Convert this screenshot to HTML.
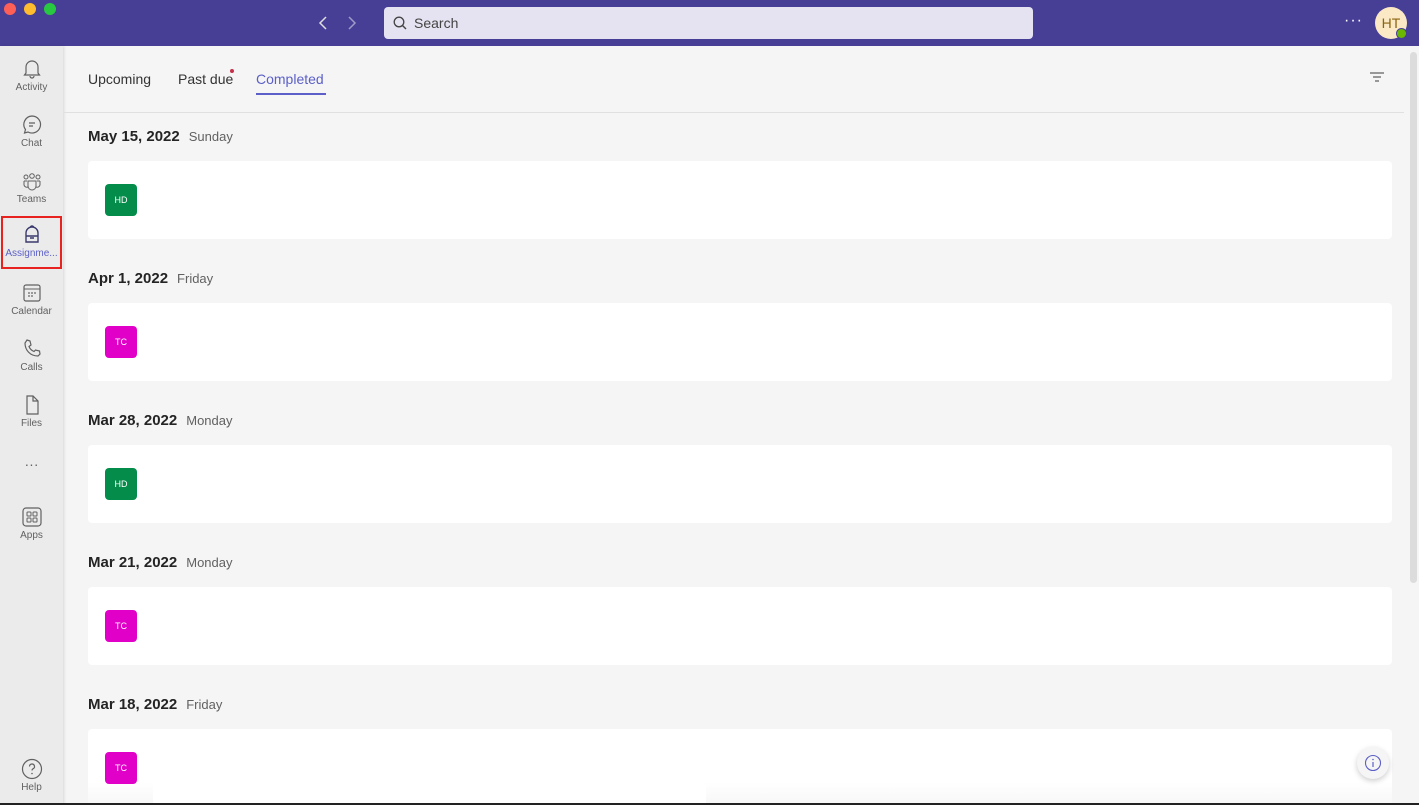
<!DOCTYPE html>
<html><head><meta charset="utf-8"><style>
*{margin:0;padding:0;box-sizing:border-box}
body{width:1419px;height:805px;overflow:hidden;background:#f5f5f5;font-family:"Liberation Sans",sans-serif;position:relative}
.top{position:absolute;left:0;top:0;width:1419px;height:46px;background:#473f96}
.dot{position:absolute;top:3px;width:12px;height:12px;border-radius:50%}
.search{position:absolute;left:384px;top:7px;width:649px;height:32px;background:#e5e3f1;border-radius:4px;font-size:14px;color:#444;padding:8px 0 0 30px}
.side{position:absolute;left:0;top:46px;width:63px;height:759px;background:#ebebeb;box-shadow:1px 0 3px rgba(0,0,0,.12)}
.it{position:absolute;left:0;width:63px;text-align:center;font-size:10px;color:#616161}
.it svg{display:block;margin:0 auto 2px}
.tab{position:absolute;top:71px;font-size:14px;color:#333}
.date{position:absolute;left:88px;font-size:15px;font-weight:bold;color:#242424}
.date span{font-weight:normal;font-size:13px;color:#616161;margin-left:9px}
.card{position:absolute;left:88px;width:1304px;height:78px;background:#fff;border-radius:4px}
.av{position:absolute;left:17px;top:23px;width:32px;height:32px;border-radius:4px;color:#fff;font-size:9px;text-align:center;line-height:32px}
</style></head><body>
<div class="top">
<div class="dot" style="left:4px;background:#fe5f57"></div>
<div class="dot" style="left:24px;background:#febc2e"></div>
<div class="dot" style="left:44px;background:#28c840"></div>
<svg style="position:absolute;left:316px;top:15px" width="14" height="16"><path d="M10 2L4 8l6 6" stroke="#ddd" stroke-width="1.5" fill="none"/></svg>
<svg style="position:absolute;left:345px;top:15px" width="14" height="16"><path d="M4 2l6 6-6 6" stroke="#9f9bc9" stroke-width="1.5" fill="none"/></svg>
<div class="search"><svg style="position:absolute;left:9px;top:9px" width="14" height="14"><circle cx="6" cy="6" r="4.8" stroke="#444" stroke-width="1.3" fill="none"/><path d="M9.5 9.5L13 13" stroke="#444" stroke-width="1.4"/></svg>Search</div>
<div style="position:absolute;left:1344px;top:12px;color:#fff;font-size:16px;letter-spacing:1px">···</div>
<div style="position:absolute;left:1375px;top:7px;width:32px;height:32px;border-radius:50%;background:#fbe9c6;color:#8a6410;font-size:14px;text-align:center;line-height:32px">HT</div>
<div style="position:absolute;left:1396px;top:28px;width:11px;height:11px;border-radius:50%;background:#6bb700;border:1.5px solid #473f96"></div>
</div>
<div class="side">
<div class="it" style="top:12px"><svg width="22" height="22"><path d="M5 15V9a6 6 0 0 1 12 0v6l1.5 2h-15z M9 18a2 2 0 0 0 4 0" stroke="#616161" stroke-width="1.2" fill="none"/></svg>Activity</div>
<div class="it" style="top:68px"><svg width="22" height="22"><path d="M11 2a8.5 8.5 0 1 1-4 16l-3.5 1 1-3.5A8.5 8.5 0 0 1 11 2z M8 9h6 M8 12h4" stroke="#616161" stroke-width="1.2" fill="none"/></svg>Chat</div>
<div class="it" style="top:124px"><svg width="22" height="22"><circle cx="5" cy="7" r="2" stroke="#616161" fill="none"/><circle cx="11" cy="6" r="2.3" stroke="#616161" fill="none"/><circle cx="17" cy="7" r="2" stroke="#616161" fill="none"/><path d="M7 11h8v5a4 4 0 0 1-8 0z M3 11h3 M16 11h3 M3 11v4a3 3 0 0 0 4 2 M19 11v4a3 3 0 0 1-4 2" stroke="#616161" fill="none"/></svg>Teams</div>
<div style="position:absolute;left:1px;top:170px;width:61px;height:53px;border:2px solid #e8231f"></div>
<div class="it" style="top:178px;color:#5b5fc7"><svg width="20" height="22"><path d="M4 9a6 6 0 0 1 12 0v9H4z M8 4a2 2 0 0 1 4 0 M4 12h12 M8 14h4" stroke="#3b3a6e" stroke-width="1.4" fill="none"/></svg>Assignme...</div>
<div class="it" style="top:236px"><svg width="22" height="22"><rect x="3" y="3" width="16" height="16" rx="2" stroke="#616161" stroke-width="1.2" fill="none"/><path d="M3 7h16" stroke="#616161"/><circle cx="8" cy="11" r=".9" fill="#616161"/><circle cx="11" cy="11" r=".9" fill="#616161"/><circle cx="14" cy="11" r=".9" fill="#616161"/><circle cx="8" cy="14" r=".9" fill="#616161"/><circle cx="11" cy="14" r=".9" fill="#616161"/></svg>Calendar</div>
<div class="it" style="top:292px"><svg width="22" height="22"><path d="M6 2l3 1 1 4-2 1.5a9 9 0 0 0 5 5L14.5 12l4 1 .5 3-2 2C9 18 4 12 4 5z" stroke="#616161" stroke-width="1.2" fill="none"/></svg>Calls</div>
<div class="it" style="top:348px"><svg width="22" height="22"><path d="M6 2h6l5 5v13H6z M12 2v5h5" stroke="#616161" stroke-width="1.2" fill="none"/></svg>Files</div>
<div class="it" style="top:410px;font-size:14px">···</div>
<div class="it" style="top:460px"><svg width="22" height="22"><rect x="2" y="2" width="18" height="18" rx="3" stroke="#616161" stroke-width="1.2" fill="none"/><rect x="6" y="6" width="4" height="4" rx=".8" stroke="#616161" fill="none"/><rect x="12" y="6" width="4" height="4" rx=".8" stroke="#616161" fill="none"/><rect x="6" y="12" width="4" height="4" rx=".8" stroke="#616161" fill="none"/><rect x="12" y="12" width="4" height="4" rx=".8" stroke="#616161" fill="none"/></svg>Apps</div>
<div class="it" style="top:712px"><svg width="22" height="22"><circle cx="11" cy="11" r="9.5" stroke="#616161" stroke-width="1.2" fill="none"/><path d="M8.5 8.5a2.5 2.5 0 1 1 3.5 2.3c-.7.4-1 .8-1 1.7" stroke="#616161" stroke-width="1.2" fill="none"/><circle cx="11" cy="15.5" r=".8" fill="#616161"/></svg>Help</div>
</div>
<div class="tab" style="left:88px">Upcoming</div>
<div class="tab" style="left:178px">Past due</div>
<div style="position:absolute;left:230px;top:69px;width:4px;height:4px;border-radius:50%;background:#c4314b"></div>
<div class="tab" style="left:256px;color:#5b5fc7">Completed</div>
<div style="position:absolute;left:256px;top:93px;width:70px;height:2px;background:#5b5fc7"></div>
<svg style="position:absolute;left:1369px;top:71px" width="16" height="12"><path d="M1 2h14M4 6h8M6 10h4" stroke="#616161" stroke-width="1.2"/></svg>
<div style="position:absolute;left:64px;top:112px;width:1340px;height:1px;background:#e0e0e0"></div>
<div style="position:absolute;left:1410px;top:52px;width:7px;height:531px;border-radius:4px;background:#dcdcdc"></div>

<div class="date" style="top:128px">May 15, 2022<span>Sunday</span></div>
<div class="card" style="top:161px"><div class="av" style="background:#038c4a">HD</div></div>
<div class="date" style="top:270px">Apr 1, 2022<span>Friday</span></div>
<div class="card" style="top:303px"><div class="av" style="background:#e100c8">TC</div></div>
<div class="date" style="top:412px">Mar 28, 2022<span>Monday</span></div>
<div class="card" style="top:445px"><div class="av" style="background:#038c4a">HD</div></div>
<div class="date" style="top:554px">Mar 21, 2022<span>Monday</span></div>
<div class="card" style="top:587px"><div class="av" style="background:#e100c8">TC</div></div>
<div class="date" style="top:696px">Mar 18, 2022<span>Friday</span></div>
<div class="card" style="top:729px;height:76px;background:linear-gradient(#fff 70%,#f7f7f7)"><div class="av" style="background:#e100c8">TC</div><div style="position:absolute;left:65px;top:34px;width:553px;height:42px;background:#fff"></div></div>
<div style="position:absolute;left:1357px;top:747px;width:32px;height:32px;border-radius:50%;background:#f5f5f5;box-shadow:0 2px 6px rgba(0,0,0,.2)"><svg style="position:absolute;left:7px;top:7px" width="18" height="18"><circle cx="9" cy="9" r="7.5" stroke="#5b5fc7" stroke-width="1.1" fill="none"/><path d="M9 8v5" stroke="#5b5fc7" stroke-width="1.2"/><circle cx="9" cy="5.5" r=".8" fill="#5b5fc7"/></svg></div>
<div style="position:absolute;left:0;top:803px;width:1419px;height:2px;background:#222"></div>
</body></html>
